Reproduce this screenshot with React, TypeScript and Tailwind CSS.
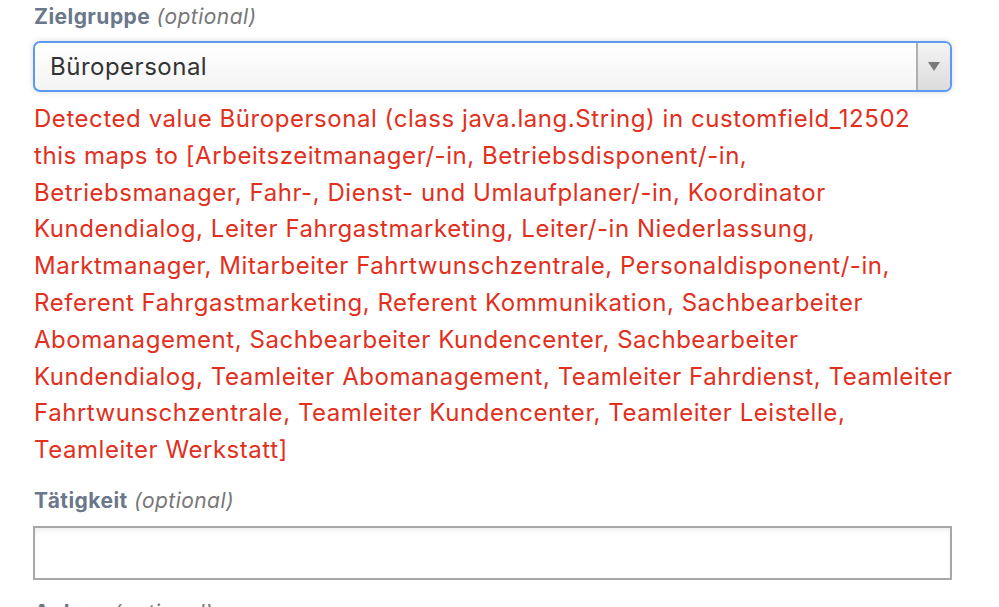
const lines = [
  "Detected value Büropersonal (class java.lang.String) in customfield_12502",
  "this maps to [Arbeitszeitmanager/-in, Betriebsdisponent/-in,",
  "Betriebsmanager, Fahr-, Dienst- und Umlaufplaner/-in, Koordinator",
  "Kundendialog, Leiter Fahrgastmarketing, Leiter/-in Niederlassung,",
  "Marktmanager, Mitarbeiter Fahrtwunschzentrale, Personaldisponent/-in,",
  "Referent Fahrgastmarketing, Referent Kommunikation, Sachbearbeiter",
  "Abomanagement, Sachbearbeiter Kundencenter, Sachbearbeiter",
  "Kundendialog, Teamleiter Abomanagement, Teamleiter Fahrdienst, Teamleiter",
  "Fahrtwunschzentrale, Teamleiter Kundencenter, Teamleiter Leistelle,",
  "Teamleiter Werkstatt]",
];

const Label = ({ text }: { text: string }) => (
  <div className="text-[21px] leading-[24px] tracking-[0.45px]">
    <span className="font-bold text-[#6b778a]">{text}</span>{" "}
    <span className="italic text-[#777]">(optional)</span>
  </div>
);

export default function App() {
  return (
    <div className="w-[999px] h-[607px] overflow-hidden bg-white font-['Inter','Liberation_Sans',sans-serif]">
      <div className="pl-[34px] pr-[47px] pt-[5px]">
        <Label text="Zielgruppe" />

        <div className="mt-[12px] h-[51px] flex rounded-[7px] border-2 border-[#5d9bf3] bg-gradient-to-b from-white to-[#f4f4f4] shadow-[0_0_6px_rgba(0,0,0,0.15)] overflow-hidden -ml-[1px]">
          <div className="flex-1 flex items-center pl-[15px] text-[24px] tracking-[0.5px] text-[#333]">Büropersonal</div>
          <div className="w-[34px] flex items-center justify-center border-l-2 border-[#b0b0b0] bg-gradient-to-b from-[#f4f4f4] to-[#dcdcdc]">
            <div className="w-0 h-0 border-l-[6px] border-r-[6px] border-t-[9px] border-l-transparent border-r-transparent border-t-[#7a7a7a]" />
          </div>
        </div>

        <div className="mt-[9px] text-[24px] leading-[36.8px] tracking-[0.55px] text-[#e1301d]">
          {lines.map((l) => (
            <div key={l} className="whitespace-nowrap">{l}</div>
          ))}
        </div>

        <div className="mt-[20px]">
          <Label text="Tätigkeit" />
        </div>
        <div className="mt-[13px] h-[54px] border-2 border-[#a8a8a8] bg-white shadow-[inset_0_3px_4px_rgba(0,0,0,0.06)] -ml-[1px]" />

        <div className="mt-[21px]">
          <Label text="Anlass" />
        </div>
      </div>
    </div>
  );
}
